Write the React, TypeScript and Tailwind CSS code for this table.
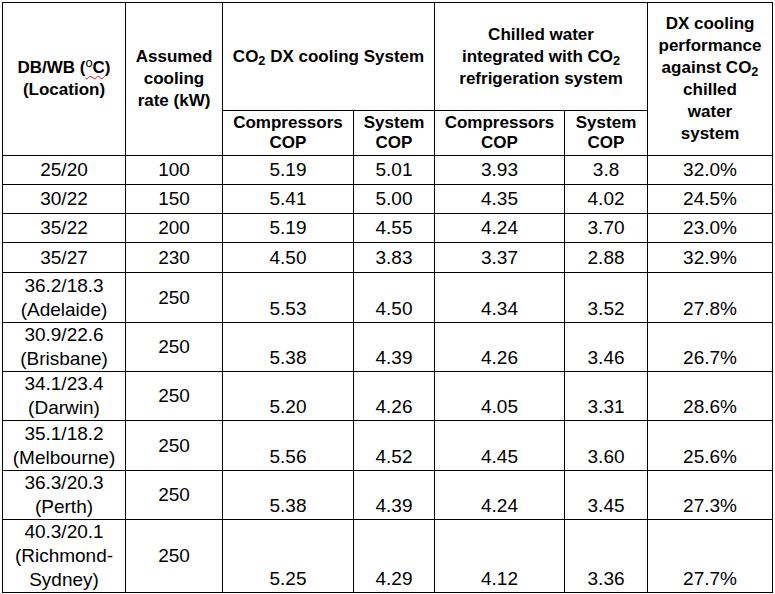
const rows: { loc: string[]; rate: string; v: string[]; h: string }[] = [
  { loc: ['25/20'], rate: '100', v: ['5.19', '5.01', '3.93', '3.8', '32.0%'], h: 'h-[29px]' },
  { loc: ['30/22'], rate: '150', v: ['5.41', '5.00', '4.35', '4.02', '24.5%'], h: 'h-[29px]' },
  { loc: ['35/22'], rate: '200', v: ['5.19', '4.55', '4.24', '3.70', '23.0%'], h: 'h-[29px]' },
  { loc: ['35/27'], rate: '230', v: ['4.50', '3.83', '3.37', '2.88', '32.9%'], h: 'h-[30px]' },
  { loc: ['36.2/18.3', '(Adelaide)'], rate: '250', v: ['5.53', '4.50', '4.34', '3.52', '27.8%'], h: 'h-[50px]' },
  { loc: ['30.9/22.6', '(Brisbane)'], rate: '250', v: ['5.38', '4.39', '4.26', '3.46', '26.7%'], h: 'h-[49px]' },
  { loc: ['34.1/23.4', '(Darwin)'], rate: '250', v: ['5.20', '4.26', '4.05', '3.31', '28.6%'], h: 'h-[49px]' },
  { loc: ['35.1/18.2', '(Melbourne)'], rate: '250', v: ['5.56', '4.52', '4.45', '3.60', '25.6%'], h: 'h-[50px]' },
  { loc: ['36.3/20.3', '(Perth)'], rate: '250', v: ['5.38', '4.39', '4.24', '3.45', '27.3%'], h: 'h-[49px]' },
  { loc: ['40.3/20.1', '(Richmond-', 'Sydney)'], rate: '250', v: ['5.25', '4.29', '4.12', '3.36', '27.7%'], h: 'h-[73px]' },
];

const cell = 'border border-black p-0 text-center';

export default function App() {
  return (
    <div className="min-h-screen bg-white pt-[2px] pl-[2px] font-['Liberation_Sans',Arial,sans-serif] text-black">
      <table className="w-[770px] table-fixed border-collapse">
        <colgroup>
          <col className="w-[123px]" />
          <col className="w-[97px]" />
          <col className="w-[131px]" />
          <col className="w-[81px]" />
          <col className="w-[130px]" />
          <col className="w-[83px]" />
          <col className="w-[125px]" />
        </colgroup>
        <thead className="text-[17px] font-bold leading-[22px]">
          <tr className="h-[108px]">
            <th rowSpan={2} className={`${cell} align-middle`}>
              DB/WB (
              <span className="underline decoration-wavy decoration-red-600 decoration-1 underline-offset-2">
                <sup className="font-normal">o</sup>C
              </span>
              )<br />
              (Location)
            </th>
            <th rowSpan={2} className={`${cell} align-middle`}>
              Assumed
              <br />
              cooling
              <br />
              rate (kW)
            </th>
            <th colSpan={2} className={`${cell} align-middle`}>
              CO<sub>2</sub> DX cooling System
            </th>
            <th colSpan={2} className={`${cell} align-middle`}>
              Chilled water
              <br />
              integrated with CO<sub>2</sub>
              <br />
              refrigeration system
            </th>
            <th rowSpan={2} className={`${cell} align-middle`}>
              DX cooling
              <br />
              performance
              <br />
              against CO<sub>2</sub>
              <br />
              chilled
              <br />
              water
              <br />
              system
            </th>
          </tr>
          <tr className="h-[45px] leading-[20px]">
            <th className={cell}>
              Compressors
              <br />
              COP
            </th>
            <th className={cell}>
              System
              <br />
              COP
            </th>
            <th className={cell}>
              Compressors
              <br />
              COP
            </th>
            <th className={cell}>
              System
              <br />
              COP
            </th>
          </tr>
        </thead>
        <tbody className="text-[19px] leading-[24px]">
          {rows.map((r) => (
            <tr key={r.loc.join()} className={r.h}>
              <td className={`${cell} align-middle`}>
                {r.loc.map((l) => (
                  <div key={l}>{l}</div>
                ))}
              </td>
              <td className={`${cell} align-middle`}>{r.rate}</td>
              {r.v.map((v, i) => (
                <td key={i} className={`${cell} ${r.loc.length > 1 ? 'align-bottom pb-[1px]' : 'align-middle'}`}>
                  {v}
                </td>
              ))}
            </tr>
          ))}
        </tbody>
      </table>
    </div>
  );
}
